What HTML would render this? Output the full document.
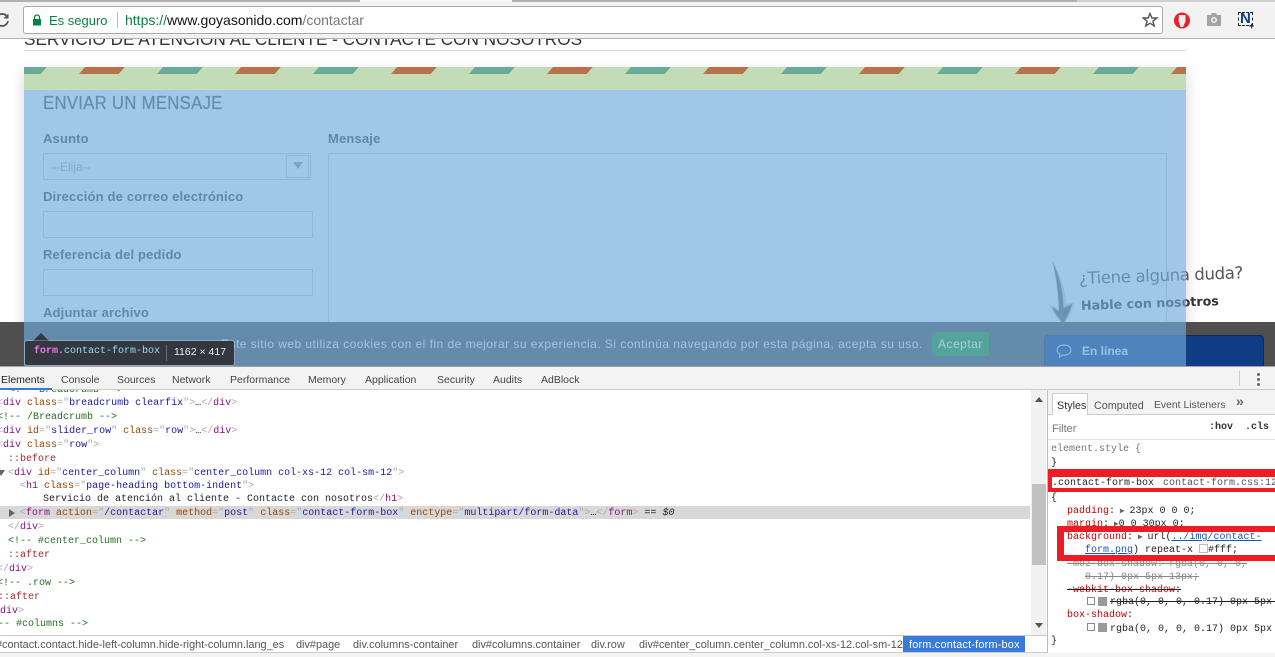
<!DOCTYPE html>
<html><head><meta charset="utf-8">
<style>
html,body{margin:0;padding:0;background:#fff}
#r{position:relative;width:1275px;height:657px;overflow:hidden;background:#fff;font-family:"Liberation Sans",sans-serif}
#r div,#r span.a{position:absolute}
.t{white-space:pre}
.m{font:10px/14px "Liberation Mono",monospace;white-space:pre;height:14px;color:#222}
.g{color:#a8a8a8}.p{color:#881280}.n{color:#994500}.v{color:#1a1aa6}.c{color:#236e25}.e{color:#a52a2a}
.lab{font:bold 13px/16px "Liberation Sans",sans-serif;color:#444;white-space:pre;letter-spacing:.17px}
.inp{box-sizing:border-box;border:1px solid #d0d0d0;background:#fff}
.tab{font:10.5px/14px "Liberation Sans",sans-serif;color:#444;top:373px;white-space:pre}
.cr{font:10.9px/14px "Liberation Sans",sans-serif;color:#555;top:638px;white-space:pre}
.s{color:#c80000}
.red{background:#ee1c25}
</style></head><body>
<div id="r">

<!-- page -->
<div class="t" style="left:24px;top:29px;font:17.2px/20px 'Liberation Sans',sans-serif;color:#333">SERVICIO DE ATENCIÓN AL CLIENTE - CONTACTE CON NOSOTROS</div>
<div style="left:24px;top:50px;width:1162px;height:1px;background:#d0d0d0"></div>

<div style="left:24px;top:67px;width:1162px;height:300px;background:#fff;box-shadow:0 5px 13px rgba(0,0,0,.17)"></div>

<div class="t" style="left:43px;top:93px;font:18px/20px 'Liberation Sans',sans-serif;color:#555;letter-spacing:.3px;transform:scaleX(.93);transform-origin:left center;-webkit-text-stroke:.3px #555">ENVIAR UN MENSAJE</div>
<div class="lab" style="left:43px;top:131px">Asunto</div>
<div class="lab" style="left:328px;top:131px">Mensaje</div>
<div class="inp" style="left:43px;top:153px;width:268px;height:27px"></div>
<div class="t" style="left:52px;top:160px;font:12px/14px 'Liberation Sans',sans-serif;color:#aaa">--Elija--</div>
<div class="inp" style="left:286px;top:155px;width:23px;height:23px"></div>
<div style="left:293px;top:162px;width:0;height:0;border-left:5px solid transparent;border-right:5px solid transparent;border-top:7px solid #999"></div>
<div class="inp" style="left:328px;top:153px;width:839px;height:230px"></div>
<div class="lab" style="left:43px;top:189px">Dirección de correo electrónico</div>
<div class="inp" style="left:43px;top:211px;width:270px;height:27px"></div>
<div class="lab" style="left:43px;top:247px">Referencia del pedido</div>
<div class="inp" style="left:43px;top:269px;width:270px;height:27px"></div>
<div class="lab" style="left:43px;top:305px">Adjuntar archivo</div>
<div class="inp" style="left:43px;top:327px;width:171px;height:27px"></div>
<div class="inp" style="left:217px;top:327px;width:94px;height:27px;background:#ddd"></div>

<!-- cookie bar -->
<div style="left:0;top:322px;width:1275px;height:44px;background:#4f4f4f"></div>

<!-- handwritten -->
<div class="t" style="left:1079px;top:268px;font:16.6px/22px 'DejaVu Sans',sans-serif;color:#555;transform:rotate(-2deg);transform-origin:left center;letter-spacing:-.4px">¿Tiene alguna duda?</div>
<div class="t" style="left:1081px;top:297px;font:bold 12.7px/18px 'DejaVu Sans',sans-serif;color:#333;transform:rotate(-2deg);transform-origin:left center">Hable con nosotros</div>
<svg style="position:absolute;left:1045px;top:258px" width="36" height="72" viewBox="0 0 36 72">
<path d="M7 3C14 14 21 30 21 46L30 44C27 54 22 62 18 69C13 62 7 54 4 46L13 51C13 34 10 18 7 3Z" fill="#777" opacity=".3"/>
<path d="M8 4C13 15 18 30 18.500 50L27 46C25 54 21 61 18 66C14 60 9 54 7 49L14 53C14 36 11 18 8 4Z" fill="#666"/>
</svg>

<!-- chat -->
<div style="left:1044px;top:335px;width:220px;height:34px;background:#0f3c84;border:1px solid #0a2c66;box-sizing:border-box;border-radius:4px 4px 0 0"></div>
<svg style="position:absolute;left:1056px;top:344px" width="16" height="14" viewBox="0 0 16 14"><path d="M8 1C4 1 1 3 1 6C1 8 2.500 9.500 4 10L3.500 13L7 11C11 11.500 15 9.500 15 6C15 3 12 1 8 1Z" fill="none" stroke="#e4ecf8" stroke-width="1"/></svg>
<div class="t" style="left:1082px;top:344px;font:bold 12px/14px 'Liberation Sans',sans-serif;color:#e8eef8">En línea</div>

<!-- highlight overlay -->
<div style="left:24px;top:67px;width:1162px;height:23px;background:#c4dcb6"></div>
<svg style="position:absolute;left:24px;top:67px" width="1162" height="7">
<defs><pattern id="st" patternUnits="userSpaceOnUse" x="-23" y="0" width="156" height="7">
<polygon points="0,7 6,0 45.700,0 39.700,7" fill="#68ab98"/>
<polygon points="78,7 84,0 123.700,0 117.700,7" fill="#b5724c"/>
</pattern></defs>
<rect width="1162" height="7" fill="url(#st)"/>
</svg>
<div style="left:24px;top:90px;width:1162px;height:276px;background:rgba(111,168,220,.66)"></div>

<!-- cookie text over overlay -->
<div class="t" style="left:221px;top:337px;font:12px/14px 'Liberation Sans',sans-serif;color:#a3c3e2;letter-spacing:.47px">Este sitio web utiliza cookies con el fin de mejorar su experiencia. Si continúa navegando por esta página, acepta su uso.</div>
<div style="left:932px;top:332px;width:57px;height:24px;background:#53a59b;border-radius:3px"></div>
<div class="t" style="left:938px;top:337px;font:12px/14px 'Liberation Sans',sans-serif;color:#a3cfe0;letter-spacing:.5px">Aceptar</div>

<!-- toolbar -->
<div style="left:0;top:0;width:1275px;height:38px;background:#f2f2f2;border-bottom:1px solid #b4b4b4;box-sizing:content-box"></div>
<div style="left:0;top:0;width:360px;height:2px;background:#b0b0b0"></div>
<div style="left:360px;top:0;width:152px;height:2px;background:#f7f7f7"></div>
<div style="left:512px;top:0;width:565px;height:2px;background:#b0b0b0"></div>
<div style="left:1077px;top:0;width:198px;height:2px;background:#d0d0d0"></div>
<svg style="position:absolute;left:-5px;top:12px" width="16" height="16" viewBox="0 0 16 16"><path d="M12 4.500A6 6 0 1 0 13 9" fill="none" stroke="#555" stroke-width="1.800"/><path d="M13.500 1.500V6.500H8.500Z" fill="#555"/></svg>
<div style="left:23px;top:6px;width:1140px;height:28px;box-sizing:border-box;background:#fff;border:1px solid #aaa;border-radius:3px"></div>
<svg style="position:absolute;left:31px;top:14px" width="12" height="12" viewBox="0 0 12 12"><path d="M3.500 5V3.500A2.500 2.500 0 0 1 8.500 3.500V5" fill="none" stroke="#0b8043" stroke-width="1.300"/><rect x="2" y="5" width="8" height="6.500" fill="#0b8043"/></svg>
<div class="t" style="left:49px;top:13px;font:13px/15px 'Liberation Sans',sans-serif;color:#0b8043">Es seguro</div>
<div style="left:117px;top:12px;width:1px;height:16px;background:#bbb"></div>
<div class="t" style="left:125px;top:13px;font:14px/15px 'Liberation Sans',sans-serif;color:#777"><span style="color:#0b8043">https://</span><span style="color:#111">www.goyasonido.com</span>/contactar</div>
<svg style="position:absolute;left:1142px;top:12px" width="16" height="16" viewBox="0 0 16 16"><path d="M8 1.500L9.900 6H14.800L10.900 9.100L12.300 14L8 11.200L3.700 14L5.100 9.100L1.200 6H6.100Z" fill="none" stroke="#555" stroke-width="1.400"/></svg>
<svg style="position:absolute;left:1174px;top:12px" width="16" height="17" viewBox="0 0 16 17"><ellipse cx="8" cy="8.500" rx="8" ry="8" fill="#e8202a"/><path d="M5 3H11.500V9.500L9 15H6.500L4.500 9Z" fill="#eee"/></svg>
<svg style="position:absolute;left:1206px;top:12px" width="16" height="15" viewBox="0 0 16 15"><path d="M1 3H5L6 1H10L11 3H15V14H1Z" fill="#a3a3a3"/><circle cx="8" cy="8" r="3" fill="#f2f2f2"/><circle cx="8" cy="8" r="1.500" fill="#a3a3a3"/></svg>
<div style="left:1238px;top:12px;width:15px;height:14px;border:1px dashed #222;box-sizing:border-box"></div>
<div class="t" style="left:1240px;top:11px;font:bold 15px/16px 'Liberation Sans',sans-serif;color:#0f3c8c">N</div>
<div class="t" style="left:1249px;top:21px;font:bold 9px/10px 'Liberation Sans',sans-serif;color:#222">+</div>

<!-- tooltip -->
<div style="left:33px;top:333px;width:0;height:0;border-left:8px solid transparent;border-right:8px solid transparent;border-bottom:8px solid #333740"></div>
<div style="left:25px;top:341px;width:209px;height:24px;background:#333740;border-radius:2px;box-shadow:0 0 0 1px rgba(255,255,255,.25)"></div>
<div class="t" style="left:34px;top:345px;font:10px/14px 'Liberation Mono',monospace;color:#fff"><span style="color:#ee78e6;font-weight:bold">form</span><span style="color:#9bdcf7">.contact-form-box</span></div>
<div style="left:166px;top:345px;width:1px;height:16px;background:#6a6d75"></div>
<div class="t" style="left:174px;top:345px;font:10.5px/14px 'Liberation Sans',sans-serif;color:#eee">1162 × 417</div>

<!-- devtools tabs -->
<div style="left:0;top:366px;width:1275px;height:24px;background:#f3f3f3;border-top:1px solid #a3a3a3;border-bottom:1px solid #ccc;box-sizing:border-box"></div>
<div class="tab" style="left:1px;color:#222">Elements</div>
<div class="tab" style="left:61px">Console</div>
<div class="tab" style="left:117px">Sources</div>
<div class="tab" style="left:172px">Network</div>
<div class="tab" style="left:230px">Performance</div>
<div class="tab" style="left:308px">Memory</div>
<div class="tab" style="left:365px">Application</div>
<div class="tab" style="left:437px">Security</div>
<div class="tab" style="left:493px">Audits</div>
<div class="tab" style="left:541px">AdBlock</div>
<div style="left:0;top:388px;width:52px;height:2px;background:#3879d9"></div>
<div style="left:1239px;top:371px;width:1px;height:15px;background:#ccc"></div>
<div style="left:1257px;top:373px;width:3px;height:3px;background:#666;border-radius:2px"></div>
<div style="left:1257px;top:378px;width:3px;height:3px;background:#666;border-radius:2px"></div>
<div style="left:1257px;top:383px;width:3px;height:3px;background:#666;border-radius:2px"></div>

<!-- elements pane -->
<div style="left:0;top:390px;width:1046px;height:245px;overflow:hidden;background:#fff">
<div style="left:0;top:116px;width:1030px;height:13px;background:#d8d8d8"></div>
<div style="left:0;top:2px;width:1030px;height:243px">
<div class="m c" style="left:9px;top:-8px">&lt;!-- Breadcrumb --&gt;</div>
<div class="m" style="left:-3px;top:5px"><span class="g">&lt;</span><span class="p">div</span> <span class="n">class</span><span class="g">="</span><span class="v">breadcrumb clearfix</span><span class="g">"&gt;</span>…<span class="g">&lt;/</span><span class="p">div</span><span class="g">&gt;</span></div>
<div class="m c" style="left:-3px;top:19px">&lt;!-- /Breadcrumb --&gt;</div>
<div class="m" style="left:-3px;top:33px"><span class="g">&lt;</span><span class="p">div</span> <span class="n">id</span><span class="g">="</span><span class="v">slider_row</span><span class="g">"</span> <span class="n">class</span><span class="g">="</span><span class="v">row</span><span class="g">"&gt;</span>…<span class="g">&lt;/</span><span class="p">div</span><span class="g">&gt;</span></div>
<div class="m" style="left:-3px;top:47px"><span class="g">&lt;</span><span class="p">div</span> <span class="n">class</span><span class="g">="</span><span class="v">row</span><span class="g">"&gt;</span></div>
<div class="m e" style="left:8px;top:61px">::before</div>
<div style="left:-3px;top:78px;width:0;height:0;border-left:4px solid transparent;border-right:4px solid transparent;border-top:6px solid #666"></div>
<div class="m" style="left:8px;top:75px"><span class="g">&lt;</span><span class="p">div</span> <span class="n">id</span><span class="g">="</span><span class="v">center_column</span><span class="g">"</span> <span class="n">class</span><span class="g">="</span><span class="v">center_column col-xs-12 col-sm-12</span><span class="g">"&gt;</span></div>
<div class="m" style="left:20px;top:88px"><span class="g">&lt;</span><span class="p">h1</span> <span class="n">class</span><span class="g">="</span><span class="v">page-heading bottom-indent</span><span class="g">"&gt;</span></div>
<div class="m" style="left:43px;top:101px">Servicio de atención al cliente - Contacte con nosotros<span class="g">&lt;/</span><span class="p">h1</span><span class="g">&gt;</span></div>
<div style="left:9px;top:117px;width:0;height:0;border-top:4px solid transparent;border-bottom:4px solid transparent;border-left:6px solid #666"></div>
<div class="m" style="left:20px;top:115px"><span class="g">&lt;</span><span class="p">form</span> <span class="n">action</span><span class="g">="</span><span class="v">/contactar</span><span class="g">"</span> <span class="n">method</span><span class="g">="</span><span class="v">post</span><span class="g">"</span> <span class="n">class</span><span class="g">="</span><span class="v">contact-form-box</span><span class="g">"</span> <span class="n">enctype</span><span class="g">="</span><span class="v">multipart/form-data</span><span class="g">"&gt;</span>…<span class="g">&lt;/</span><span class="p">form</span><span class="g">&gt;</span> == <i>$0</i></div>
<div class="m" style="left:8px;top:129px"><span class="g">&lt;/</span><span class="p">div</span><span class="g">&gt;</span></div>
<div class="m c" style="left:8px;top:143px">&lt;!-- #center_column --&gt;</div>
<div class="m e" style="left:8px;top:157px">::after</div>
<div class="m" style="left:-3px;top:171px"><span class="g">&lt;/</span><span class="p">div</span><span class="g">&gt;</span></div>
<div class="m c" style="left:-3px;top:185px">&lt;!-- .row --&gt;</div>
<div class="m e" style="left:-2px;top:199px">::after</div>
<div class="m" style="left:-12px;top:213px"><span class="g">&lt;/</span><span class="p">div</span><span class="g">&gt;</span></div>
<div class="m c" style="left:-14px;top:226px">&lt;!-- #columns --&gt;</div>
</div>
</div>

<!-- scrollbar -->
<div style="left:1031px;top:390px;width:15px;height:245px;background:#f1f1f1"></div>
<div style="left:1032px;top:484px;width:14px;height:81px;background:#c1c1c1"></div>
<div style="left:1035px;top:397px;width:0;height:0;border-left:4px solid transparent;border-right:4px solid transparent;border-bottom:5px solid #555"></div>
<div style="left:1035px;top:623px;width:0;height:0;border-left:4px solid transparent;border-right:4px solid transparent;border-top:5px solid #555"></div>
<div style="left:1047px;top:390px;width:1px;height:263px;background:#bbb"></div>

<!-- breadcrumb bar -->
<div style="left:0;top:635px;width:1047px;height:18px;background:#fff;border-top:1px solid #ccc;border-bottom:1px solid #ccc;box-sizing:border-box"></div>
<div style="left:0;top:653px;width:1275px;height:4px;background:#f3f3f3"></div>
<div class="cr" style="left:-4px">#contact.contact.hide-left-column.hide-right-column.lang_es</div>
<div class="cr" style="left:296px">div#page</div>
<div class="cr" style="left:353px">div.columns-container</div>
<div class="cr" style="left:472px">div#columns.container</div>
<div class="cr" style="left:591px">div.row</div>
<div class="cr" style="left:639px">div#center_column.center_column.col-xs-12.col-sm-12</div>
<div style="left:903px;top:636px;width:122px;height:16px;background:#3879d9"></div>
<div class="cr" style="left:909px;color:#fff;letter-spacing:.2px">form.contact-form-box</div>

<!-- styles pane -->
<div style="left:1048px;top:390px;width:227px;height:263px;background:#fff"></div>
<div style="left:1048px;top:390px;width:227px;height:25px;background:#f3f3f3;border-bottom:1px solid #ccc;box-sizing:border-box"></div>
<div style="left:1052px;top:393px;width:36px;height:22px;background:#fff;border:1px solid #ccc;border-bottom:none;box-sizing:border-box"></div>
<div class="t" style="left:1057px;top:399px;font:10.8px/14px 'Liberation Sans',sans-serif;color:#333">Styles</div>
<div class="t" style="left:1094px;top:399px;font:10.8px/14px 'Liberation Sans',sans-serif;color:#555">Computed</div>
<div class="t" style="left:1154px;top:399px;font:10.4px/14px 'Liberation Sans',sans-serif;color:#555">Event Listeners</div>
<div class="t" style="left:1236px;top:394px;font:bold 14px/14px 'Liberation Sans',sans-serif;color:#666">»</div>
<div class="t" style="left:1052px;top:422px;font:11px/14px 'Liberation Sans',sans-serif;color:#777">Filter</div>
<div class="m" style="left:1209px;top:421px;color:#333;font-weight:bold">:hov  .cls</div>
<div style="left:1048px;top:439px;width:227px;height:1px;background:#e5e5e5"></div>
<div class="m" style="left:1051px;top:443px;color:#777">element.style {</div>
<div class="m" style="left:1051px;top:457px">}</div>

<div class="m" style="left:1058px;top:477px;color:#222">contact-form-box</div>
<div class="m" style="left:1163px;top:477px;color:#555">contact-form.css:12</div>
<div class="m" style="left:1051px;top:492px">{</div>
<div class="m" style="left:1067px;top:505px"><span class="s">padding</span>:<span style="color:#666;font-size:8px"> ▶ </span>23px 0 0 0;</div>
<div class="m" style="left:1067px;top:518px"><span class="s">margin</span>:<span style="color:#666;font-size:8px"> ▶</span>0 0 30px 0;</div>
<div class="m" style="left:1067px;top:531px"><span class="s">background</span>:<span style="color:#666;font-size:8px"> ▶ </span>url(<span style="color:#1a55b0;text-decoration:underline">../img/contact-</span></div>
<div class="m" style="left:1085px;top:544px"><span style="color:#1a55b0;text-decoration:underline">form.png</span>) repeat-x <span style="display:inline-block;width:9px;height:9px;border:1px solid #bbb;box-sizing:border-box;vertical-align:-1px;background:#fff"></span>#fff;</div>
<div class="m" style="left:1067px;top:558px;color:#888;text-decoration:line-through">-moz-box-shadow: rgba(0, 0, 0,</div>
<div class="m" style="left:1085px;top:571px;color:#888;text-decoration:line-through">0.17) 0px 5px 13px;</div>
<div class="m" style="left:1067px;top:584px;text-decoration:line-through;color:#222"><span class="s">-webkit-box-shadow</span>:</div>
<div style="left:1087px;top:597px;width:8px;height:8px;border:1px solid #888;box-sizing:border-box"></div>
<div style="left:1098px;top:597px;width:9px;height:9px;background:#999"></div>
<div class="m" style="left:1110px;top:596px;color:#222;text-decoration:line-through">rgba(0, 0, 0, 0.17) 0px 5px 13px</div>
<div class="m" style="left:1067px;top:609px"><span class="s">box-shadow</span>:</div>
<div style="left:1087px;top:623px;width:8px;height:8px;border:1px solid #888;box-sizing:border-box"></div>
<div style="left:1098px;top:623px;width:9px;height:9px;background:#999"></div>
<div class="m" style="left:1110px;top:623px;color:#222">rgba(0, 0, 0, 0.17) 0px 5px 13px</div>
<div class="m" style="left:1051px;top:635px">}</div>

<!-- red annotation rectangles -->
<div class="red" style="left:1048px;top:469px;width:227px;height:8px"></div>
<div class="red" style="left:1048px;top:488px;width:227px;height:4px"></div>
<div class="red" style="left:1048px;top:469px;width:4px;height:23px"></div>
<div class="red" style="left:1057px;top:526px;width:218px;height:6px"></div>
<div class="red" style="left:1057px;top:555px;width:218px;height:6px"></div>
<div class="red" style="left:1057px;top:526px;width:7px;height:35px"></div>
<div class="m" style="left:1052px;top:477px">.</div>

</div>
</body></html>
